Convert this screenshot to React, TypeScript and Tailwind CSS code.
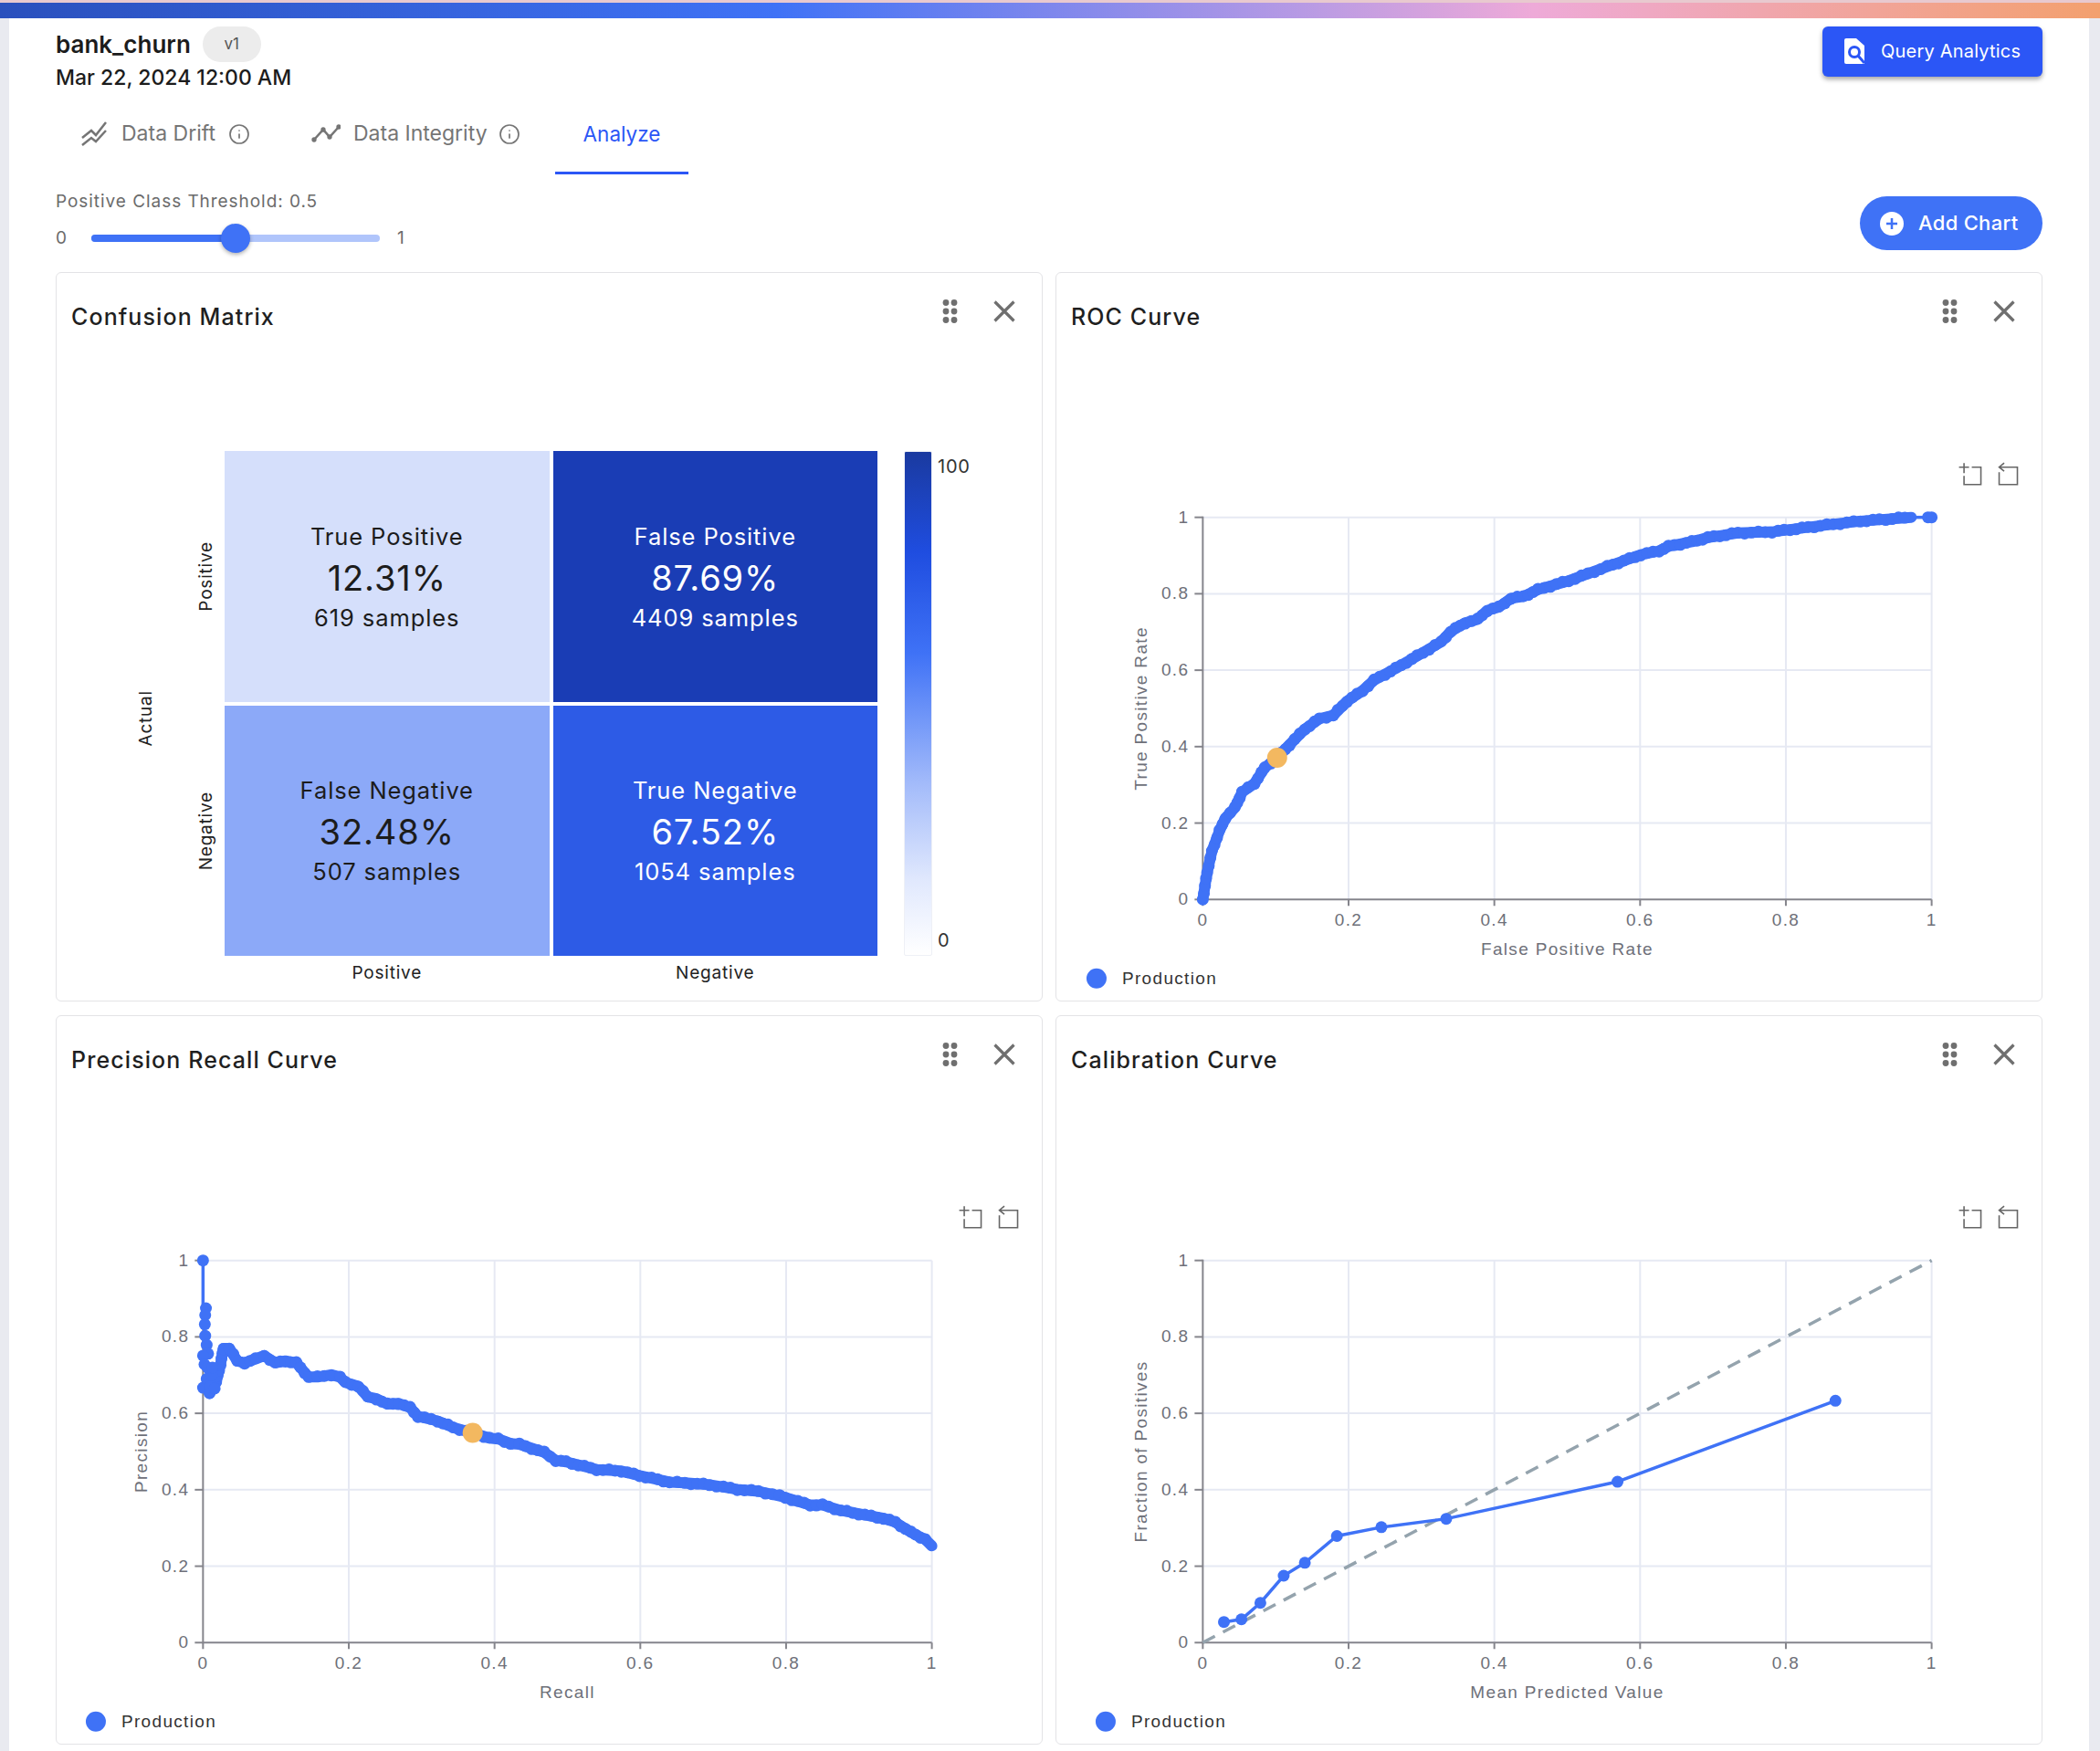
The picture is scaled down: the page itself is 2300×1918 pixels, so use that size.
import { Info } from "lucide-react";

type Point = [number, number];

interface ChartProps {
    title: string;
    xName: string;
    yName: string;
    legendX?: number;
    thick?: Point[];
    dots?: Point[];
    thin?: Point[];
    marker?: Point;
    diagonal?: boolean;
}

const BLUE = "#3f72f6";
const TICKS = [0, 0.2, 0.4, 0.6, 0.8, 1];

// plot area inside the chart svg
const px = (x: number) => 160.5 + x * 799;
const py = (y: number) => 586.5 - y * 419;
const toPoints = (pts: Point[]) => pts.map(([x, y]) => `${px(x)},${py(y)}`).join(" ");

// the real series has a symbol on every sample, which gives the line its rough edge
function samples(pts: Point[]) {
    const out: Point[] = [];
    for (let i = 0; i < pts.length - 1; i++) {
        const x1 = px(pts[i][0]);
        const y1 = py(pts[i][1]);
        const x2 = px(pts[i + 1][0]);
        const y2 = py(pts[i + 1][1]);
        const steps = Math.max(1, Math.round(Math.hypot(x2 - x1, y2 - y1) / 7));
        for (let s = 0; s < steps; s++) {
            const n = out.length;
            out.push([x1 + ((x2 - x1) * s) / steps, y1 + ((y2 - y1) * s) / steps + Math.sin(n * 1.7) * 0.9]);
        }
    }
    return out;
}

const rocCurve: Point[] = [
    [0, 0], [0.006, 0.071], [0.0125, 0.126], [0.023, 0.18], [0.031, 0.213], [0.044, 0.24], [0.054, 0.281],
    [0.071, 0.304], [0.085, 0.345], [0.102, 0.371], [0.119, 0.405], [0.14, 0.446], [0.16, 0.473], [0.179, 0.482],
    [0.198, 0.519], [0.219, 0.546], [0.235, 0.574], [0.265, 0.605], [0.294, 0.637], [0.327, 0.674], [0.34, 0.701],
    [0.36, 0.724], [0.377, 0.733], [0.39, 0.756], [0.406, 0.765], [0.423, 0.788], [0.44, 0.793], [0.46, 0.811],
    [0.502, 0.834], [0.555, 0.871], [0.601, 0.902], [0.626, 0.912], [0.639, 0.924], [0.671, 0.936], [0.693, 0.947],
    [0.734, 0.959], [0.781, 0.962], [0.847, 0.978], [0.902, 0.99], [0.972, 1],
];

const prDots: Point[] = [
    [0, 1], [0.004, 0.875], [0.003, 0.857], [0.0025, 0.833], [0.003, 0.803], [0.005, 0.779], [0.007, 0.756],
    [0, 0.751], [0.002, 0.728], [0.008, 0.718], [0, 0.667], [0.009, 0.653], [0.005, 0.69], [0.012, 0.7],
    [0.006, 0.72], [0.01, 0.67], [0.013, 0.72], [0.016, 0.665],
];

const prCurve: Point[] = [
    [0.009, 0.653], [0.018, 0.681], [0.024, 0.728], [0.028, 0.77], [0.036, 0.77], [0.047, 0.737], [0.057, 0.732],
    [0.072, 0.742], [0.084, 0.751], [0.099, 0.732], [0.113, 0.737], [0.128, 0.732], [0.145, 0.695], [0.157, 0.695],
    [0.176, 0.701], [0.188, 0.695], [0.195, 0.681], [0.213, 0.671], [0.226, 0.643], [0.238, 0.638], [0.253, 0.624],
    [0.268, 0.626], [0.284, 0.615], [0.295, 0.592], [0.322, 0.58], [0.343, 0.563], [0.37, 0.549], [0.393, 0.535],
    [0.405, 0.533], [0.422, 0.521], [0.434, 0.519], [0.468, 0.498], [0.484, 0.477], [0.498, 0.473], [0.54, 0.453],
    [0.574, 0.449], [0.599, 0.437], [0.64, 0.42], [0.661, 0.418], [0.695, 0.413], [0.733, 0.401], [0.762, 0.396],
    [0.791, 0.384], [0.833, 0.36], [0.85, 0.36], [0.875, 0.346], [0.908, 0.334], [0.934, 0.325], [0.95, 0.315],
    [0.971, 0.289], [0.991, 0.27], [1, 0.253],
];

const calibration: Point[] = [
    [0.029, 0.054], [0.053, 0.061], [0.079, 0.104], [0.111, 0.175], [0.14, 0.209], [0.184, 0.279],
    [0.245, 0.302], [0.334, 0.324], [0.569, 0.421], [0.868, 0.633],
];

function CardHeader({ title }: { title: string }) {
    return (
        <div className="flex h-[100px] shrink-0 justify-between pl-[16px] pr-[29px]">
            <h3 className="mt-[31px] text-[25px] leading-[34px] font-medium tracking-[1.1px] text-[#1f1f1f]">{title}</h3>
            <div className="mt-[28px] flex h-[28px] items-center gap-[39px]">
                <svg width="17" height="26" viewBox="0 0 17 26" fill="#6f6f6f">
                    <circle cx="4" cy="3.5" r="3.4" />
                    <circle cx="13" cy="3.5" r="3.4" />
                    <circle cx="4" cy="13" r="3.4" />
                    <circle cx="13" cy="13" r="3.4" />
                    <circle cx="4" cy="22.5" r="3.4" />
                    <circle cx="13" cy="22.5" r="3.4" />
                </svg>
                <svg width="24" height="24" viewBox="0 0 24 24" stroke="#6f6f6f" strokeWidth="3.2" fill="none">
                    <path d="M1.5 1.5L22.5 22.5M22.5 1.5L1.5 22.5" />
                </svg>
            </div>
        </div>
    );
}

function Card({ children }: { children: React.ReactNode }) {
    return <div className="flex h-[799px] flex-col rounded-[6px] border border-[#e3e3e6] bg-white">{children}</div>;
}

function ChartCard({ title, xName, yName, legendX = 44, thick, dots, thin, marker, diagonal }: ChartProps) {
    return (
        <Card>
            <CardHeader title={title} />
            <svg viewBox="0 0 1080 697" className="h-[697px] w-full font-['Liberation_Sans',sans-serif]">
                {/* toolbox */}
                <g fill="none" stroke="#666" strokeWidth="1.6">
                    <path transform="translate(989.5 108)" d="M0 4.5H11M5.5 0V11M5.5 14V23.5H24V4.5H14" />
                    <path transform="translate(1033.5 108)" d="M0 4.5H20V23.5H0V10M5.5 0L0 4.5L5.5 9" />
                </g>

                {/* grid */}
                <g stroke="#e6e9f3" strokeWidth="2">
                    {TICKS.slice(1).map((t) => (
                        <line key={t} x1={px(t)} x2={px(t)} y1={py(1)} y2={py(0)} />
                    ))}
                    {TICKS.slice(1).map((t) => (
                        <line key={t} x1={px(0)} x2={px(1)} y1={py(t)} y2={py(t)} />
                    ))}
                </g>

                {/* axes */}
                <g stroke="#85858c" strokeWidth="2">
                    <line x1={px(0)} x2={px(0)} y1={py(1) - 1} y2={py(0) + 1} />
                    <line x1={px(0)} x2={px(1)} y1={py(0)} y2={py(0)} />
                    {TICKS.map((t) => (
                        <line key={t} x1={px(0) - 9} x2={px(0)} y1={py(t)} y2={py(t)} />
                    ))}
                    {TICKS.map((t) => (
                        <line key={t} x1={px(t)} x2={px(t)} y1={py(0)} y2={py(0) + 7} />
                    ))}
                </g>

                <g fill="#6e7079" fontSize="19" letterSpacing="1.35">
                    {TICKS.map((t) => (
                        <text key={t} x={px(0) - 15} y={py(t) + 6} textAnchor="end">{t}</text>
                    ))}
                    {TICKS.map((t) => (
                        <text key={t} x={px(t)} y={py(0) + 29} textAnchor="middle">{t}</text>
                    ))}
                    <text x={px(0.5)} y={py(0) + 61} textAnchor="middle">{xName}</text>
                    <text transform={`translate(99 ${py(0.5)}) rotate(-90)`} textAnchor="middle">{yName}</text>
                </g>

                {diagonal && (
                    <line x1={px(0)} y1={py(0)} x2={px(1)} y2={py(1)} stroke="#94a3ad" strokeWidth="3.5" strokeDasharray="15 10" />
                )}
                {thin && <polyline points={toPoints(thin)} fill="none" stroke={BLUE} strokeWidth="3.5" />}
                {thick && (
                    <polyline points={toPoints(thick)} fill="none" stroke={BLUE} strokeWidth="12" strokeLinejoin="round" strokeLinecap="round" />
                )}
                {thick && samples(thick).map(([x, y], i) => (
                    <circle key={i} cx={x} cy={y} r="6.5" fill={BLUE} />
                ))}
                {dots?.map(([x, y], i) => (
                    <circle key={i} cx={px(x)} cy={py(y)} r="6.5" fill={BLUE} />
                ))}
                {marker && <circle cx={px(marker[0])} cy={py(marker[1])} r="11" fill="#f3b860" />}

                {/* legend */}
                <circle cx={legendX} cy="673" r="11" fill={BLUE} />
                <text x={legendX + 28} y="679" fontSize="19" letterSpacing="1.35" fill="#333">Production</text>
            </svg>
        </Card>
    );
}

function MatrixCell({ label, value, samples, className }: { label: string; value: string; samples: string; className: string }) {
    return (
        <div className={`flex flex-col items-center justify-center pt-[2px] ${className}`}>
            <span className="text-[25.5px] leading-[34px] tracking-[0.9px]">{label}</span>
            <span className="mt-[6px] text-[38px] leading-[44px] tracking-[0.9px]">{value}</span>
            <span className="mt-[5px] text-[25.5px] leading-[34px] tracking-[0.9px]">{samples}</span>
        </div>
    );
}

function ConfusionMatrix() {
    return (
        <Card>
            <CardHeader title="Confusion Matrix" />
            <div className="flex pl-[84px] pt-[95px] text-[19px] tracking-[0.8px] text-[#222]">
                <div className="flex h-[553px] w-[28px] items-center justify-center pt-[32px]">
                    <span className="rotate-180 [writing-mode:vertical-rl]">Actual</span>
                </div>
                <div className="ml-[38px] mr-[6px] grid h-[553px] w-[28px] grid-rows-2 gap-y-[4px]">
                    <div className="flex items-center justify-center">
                        <span className="rotate-180 [writing-mode:vertical-rl]">Positive</span>
                    </div>
                    <div className="flex items-center justify-center">
                        <span className="rotate-180 [writing-mode:vertical-rl]">Negative</span>
                    </div>
                </div>
                <div className="w-[715px]">
                    <div className="grid h-[553px] grid-cols-2 grid-rows-2 gap-[4px]">
                        <MatrixCell label="True Positive" value="12.31%" samples="619 samples" className="bg-[#d5dffb] text-[#1c1c1c]" />
                        <MatrixCell label="False Positive" value="87.69%" samples="4409 samples" className="bg-[#1a3db5] text-white" />
                        <MatrixCell label="False Negative" value="32.48%" samples="507 samples" className="bg-[#8ca9f8] text-[#1c1c1c]" />
                        <MatrixCell label="True Negative" value="67.52%" samples="1054 samples" className="bg-[#2d5be6] text-white" />
                    </div>
                    <div className="mt-[5px] grid grid-cols-2 gap-[4px] text-center leading-[28px]">
                        <span>Positive</span>
                        <span>Negative</span>
                    </div>
                </div>
                <div className="ml-[29px] h-[553px] w-[31px] rounded-[2px] border border-[#eef0f6] bg-[linear-gradient(to_bottom,#1a3aa0_0%,#1f4de0_20%,#3f72f6_40%,#a3bbfa_66%,#e0e8fd_85%,#ffffff_100%)]" />
                <div className="ml-[6px] flex h-[553px] flex-col justify-between py-[3px] text-[20px] leading-[28px] text-[#333]">
                    <span>100</span>
                    <span>0</span>
                </div>
            </div>
        </Card>
    );
}

export default function App() {
    return (
        <div className="flex min-h-[1918px] flex-col bg-[#e9eaf0] font-[Inter,sans-serif]">
            <div className="h-[3px] bg-[#e8c9cf]" />
            <div className="h-[17px] bg-[linear-gradient(to_right,#2a50bd_0%,#3f72f6_37%,#b79ae4_62%,#eeaad8_73%,#f3a06e_100%)]" />

            <main className="ml-[10px] mr-[12px] flex-1 bg-white px-[51px] pt-[9px]">
                {/* Title row */}
                <div className="flex justify-between">
                    <div>
                        <div className="flex h-[39px] items-center gap-[13px]">
                            <h1 className="text-[26px] font-semibold text-[#1c1c1c]">bank_churn</h1>
                            <span className="flex h-[39px] w-[64px] items-center justify-center rounded-full bg-[#ececec] text-[17px] text-[#555]">v1</span>
                        </div>
                        <p className="mt-[2px] text-[23px] leading-[30px] font-medium text-[#1c1c1c]">Mar 22, 2024 12:00 AM</p>
                    </div>
                    <button className="flex h-[55px] w-[241px] items-center rounded-[6px] bg-[#2b56f6] pb-[1px] pl-[24px] text-[20px] tracking-[0.2px] text-white shadow-[0_3px_5px_rgba(0,0,0,0.35)]">
                        <svg width="22" height="28" viewBox="0 0 22 28" className="mr-[18px]">
                            <path d="M2 0H13L22 8V28H2Q0 28 0 26V2Q0 0 2 0Z" fill="#fff" />
                            <circle cx="11" cy="15" r="5.5" fill="none" stroke="#2b56f6" strokeWidth="3" />
                            <path d="M15 19L22 27" stroke="#2b56f6" strokeWidth="3" />
                        </svg>
                        Query Analytics
                    </button>
                </div>

                {/* Tabs */}
                <div className="-ml-[4px] mt-[2px] flex h-[89px] items-center gap-[5px] text-[23px] text-[#757575]">
                    <div className="flex h-full items-center px-[31px]">
                        <svg width="30" height="28" viewBox="0 0 30 28" fill="none" stroke="#757575" strokeWidth="2.5" className="mr-[15px]">
                            <path d="M2 18L12 10L17 15L28 1" />
                            <path d="M2 26L12 18L17 22L28 10" />
                        </svg>
                        <span>Data Drift</span>
                        <Info size={24} strokeWidth={1.7} className="ml-[14px]" />
                    </div>
                    <div className="flex h-full items-center px-[31px]">
                        <svg width="32" height="22" viewBox="0 0 32 22" fill="#757575" stroke="#757575" strokeWidth="2.5" className="mr-[14px]">
                            <path d="M3 17L13 6L20 14L30 3" fill="none" />
                            <circle cx="3" cy="17" r="1.4" />
                            <circle cx="13" cy="6" r="1.4" />
                            <circle cx="20" cy="14" r="1.4" />
                            <circle cx="30" cy="3" r="1.4" />
                        </svg>
                        <span>Data Integrity</span>
                        <Info size={24} strokeWidth={1.7} className="ml-[12px]" />
                    </div>
                    <div className="ml-[2px] flex h-full items-center border-b-[3px] border-[#2b56f6] px-[31px] pt-[3px] text-[22.5px] text-[#2b56f6]">Analyze</div>
                </div>

                {/* Threshold and add chart */}
                <div className="flex h-[107px] justify-between">
                    <div className="pt-[16px] text-[19px] leading-[28px] tracking-[0.95px] text-[#6b6b6b]">
                        <div>Positive Class Threshold: 0.5</div>
                        <div className="mt-[10px] flex h-[32px] items-center">
                            <span className="w-[39px]">0</span>
                            <div className="relative h-[8px] w-[316px] rounded-full bg-[#b0c5fb]">
                                <div className="h-full w-[158px] rounded-full bg-[#3f72f6]" />
                                <div className="absolute left-[142px] top-[-12px] h-[32px] w-[32px] rounded-full bg-[#3f72f6] shadow-[0_2px_4px_rgba(0,0,0,0.3)]" />
                            </div>
                            <span className="ml-[19px]">1</span>
                        </div>
                    </div>
                    <div className="pt-[24px]">
                        <button className="flex h-[59px] w-[200px] items-center rounded-full bg-[#3f72f6] pl-[22px] text-[22px] font-medium tracking-[0.3px] text-white">
                            <svg width="26" height="26" viewBox="0 0 26 26" className="mr-[16px]">
                                <circle cx="13" cy="13" r="13" fill="#fff" />
                                <path d="M13 7V19M7 13H19" stroke="#3f72f6" strokeWidth="2.5" />
                            </svg>
                            Add Chart
                        </button>
                    </div>
                </div>

                {/* Charts */}
                <div className="grid grid-cols-2 gap-x-[14px] gap-y-[15px]">
                    <ConfusionMatrix />
                    <ChartCard
                        title="ROC Curve"
                        xName="False Positive Rate"
                        yName="True Positive Rate"
                        thick={rocCurve}
                        dots={[[0.995, 1], [1, 1]]}
                        thin={[[0.972, 1], [1, 1]]}
                        marker={[0.102, 0.371]}
                    />
                    <ChartCard
                        title="Precision Recall Curve"
                        xName="Recall"
                        yName="Precision"
                        legendX={43}
                        thin={[[0, 1], [0, 0.878], [0.005, 0.7], [0.009, 0.653]]}
                        dots={prDots}
                        thick={prCurve}
                        marker={[0.37, 0.549]}
                    />
                    <ChartCard
                        title="Calibration Curve"
                        xName="Mean Predicted Value"
                        yName="Fraction of Positives"
                        legendX={54}
                        diagonal
                        thin={calibration}
                        dots={calibration}
                    />
                </div>
            </main>
        </div>
    );
}
